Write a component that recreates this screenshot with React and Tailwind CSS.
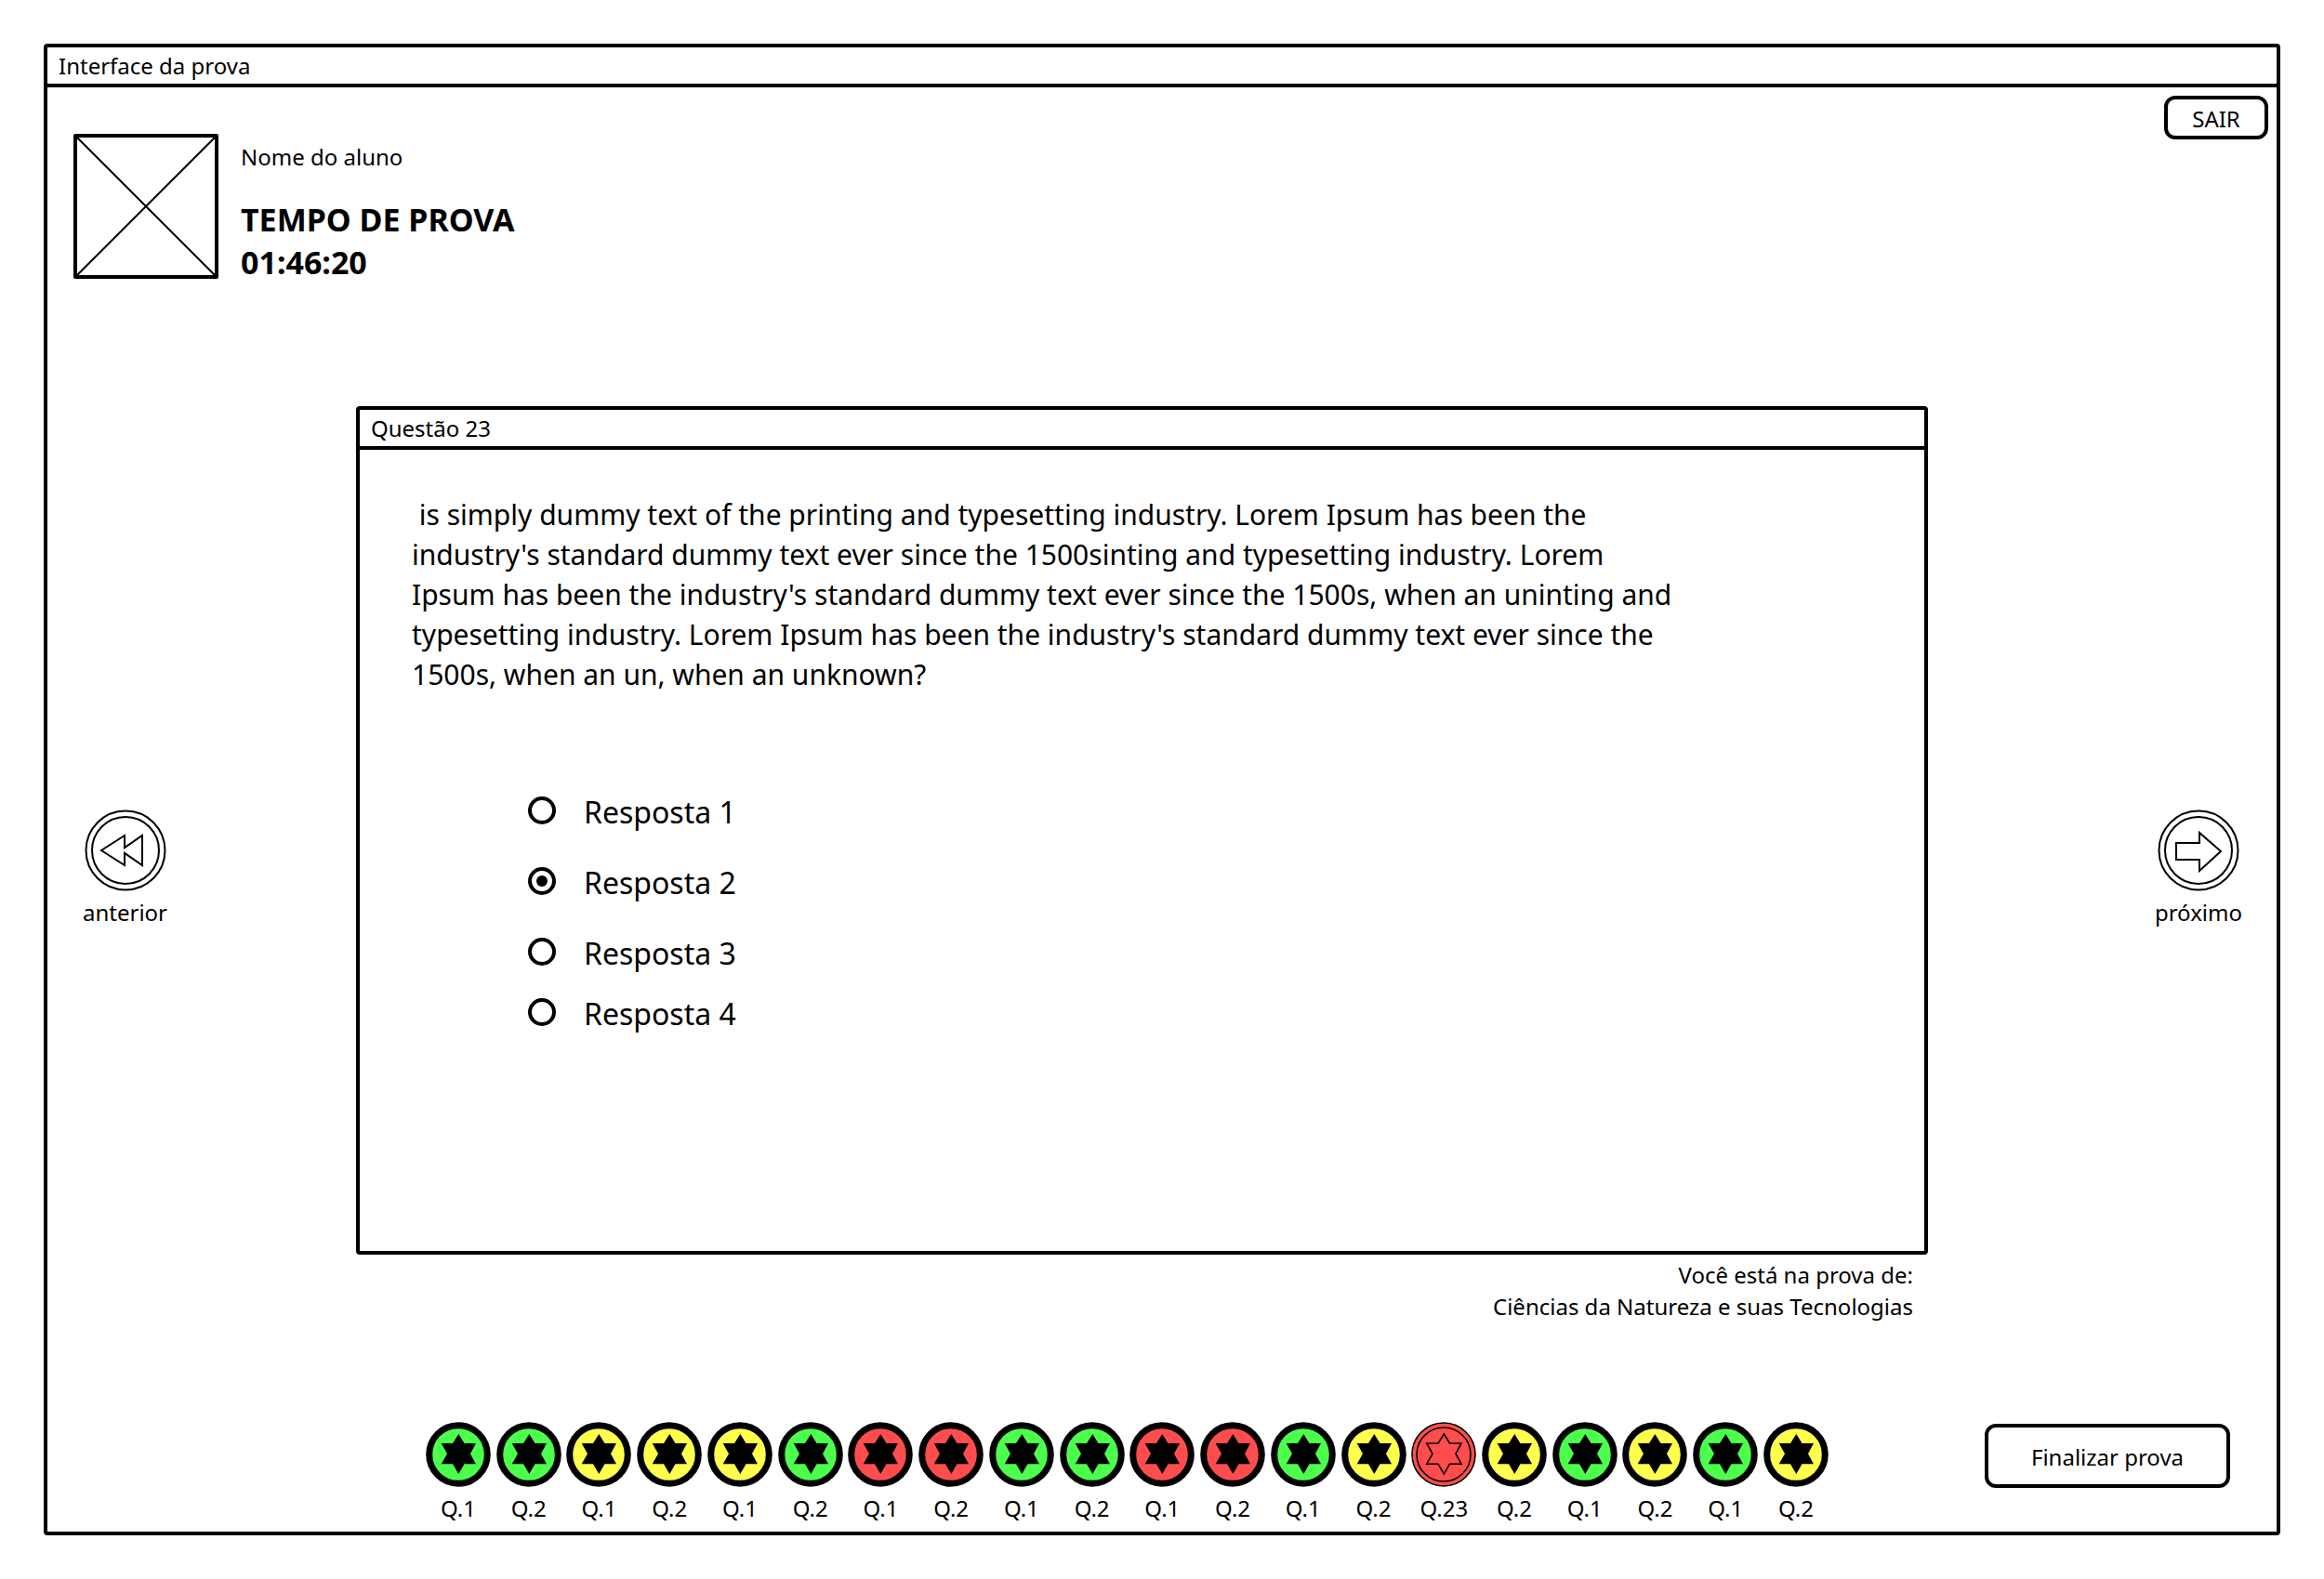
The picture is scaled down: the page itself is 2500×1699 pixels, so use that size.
import { useState } from "react";

const GREEN = "#4dff4d";
const YELLOW = "#ffff4d";
const RED = "#ff4d4d";

const QUESTIONS = [
  ["Q.1", GREEN], ["Q.2", GREEN], ["Q.1", YELLOW], ["Q.2", YELLOW], ["Q.1", YELLOW],
  ["Q.2", GREEN], ["Q.1", RED], ["Q.2", RED], ["Q.1", GREEN], ["Q.2", GREEN],
  ["Q.1", RED], ["Q.2", RED], ["Q.1", GREEN], ["Q.2", YELLOW], ["Q.23", RED],
  ["Q.2", YELLOW], ["Q.1", GREEN], ["Q.2", YELLOW], ["Q.1", GREEN], ["Q.2", YELLOW],
];

const STAR = "35.3,13 41.5,23 54,23 48,34.3 54,45.3 41.5,45.3 35.3,56 29,45.3 16.7,45.3 23,34.3 16.7,23 29,23";

function QuestionMark({ color, current }) {
  return (
    <svg viewBox="0 0 70 70" className="size-[70px]" aria-hidden="true">
      {current ? (
        <g fill={color} stroke="#000" strokeWidth="1.6">
          <circle cx="35" cy="35" r="34" />
          <circle cx="35" cy="35" r="29" />
          <polygon points={STAR} />
        </g>
      ) : (
        <>
          <circle cx="35" cy="35" r="31.3" fill={color} stroke="#000" strokeWidth="7" />
          <polygon points={STAR} fill="#000" />
        </>
      )}
    </svg>
  );
}

function NavButton({ label, points }) {
  return (
    <button type="button" className="flex flex-col items-center gap-1.5">
      <svg viewBox="0 0 88 88" className="size-[88px]" fill="none" stroke="#000" strokeWidth="2" aria-hidden="true">
        <circle cx="44" cy="44" r="42.5" />
        <circle cx="44" cy="44" r="36" />
        <polygon points={points} />
      </svg>
      <span>{label}</span>
    </button>
  );
}

function Answer({ label, checked, onChange, className }) {
  return (
    <label className={className}>
      <input
        type="radio"
        name="resposta"
        checked={checked}
        onChange={onChange}
        className="mb-1 size-[30px] appearance-none rounded-full border-4 border-black bg-white bg-clip-content p-[5px] checked:bg-black"
      />
      <span>{label}</span>
    </label>
  );
}

export default function App() {
  const [answer, setAnswer] = useState(2);
  return (
    <div className="flex min-h-screen bg-white p-[47px] font-['Noto_Sans','Open_Sans',sans-serif] text-[24px] leading-[34px] font-normal text-black">
      <div className="flex grow flex-col rounded-sm border-4 border-black">
        <h1 className="h-[43px] border-b-4 border-black pl-3 leading-[40px]">Interface da prova</h1>

        <header className="flex items-start justify-between pt-[9px] pr-[9px] pl-7">
          <div className="mt-[41px] flex gap-6">
            <svg viewBox="0 0 156 156" className="size-[156px]" fill="none" stroke="#000" role="img" aria-label="Foto do aluno">
              <rect x="2" y="2" width="152" height="152" strokeWidth="4" strokeLinejoin="round" />
              <path d="M3 3 153 153M153 3 3 153" strokeWidth="2" />
            </svg>
            <div className="pt-2">
              <p>Nome do aluno</p>
              <p className="mt-[27px] text-[34px] leading-[46px] font-bold">
                TEMPO DE PROVA
                <br />
                01:46:20
              </p>
            </div>
          </div>
          <button type="button" className="h-[47px] w-28 rounded-xl border-4 border-black pt-0.5">SAIR</button>
        </header>

        <main className="mt-[132px] grid grid-cols-[332px_minmax(0,1fr)_375px] items-start">
          <div className="mt-[434px] flex pl-[38px]">
            <NavButton label="anterior" points="18,44 43,28 43,41 62,28 62,60 43,47 43,60" />
          </div>
          <div>
            <section className="h-[913px] rounded-sm border-4 border-black">
              <h2 className="h-[43px] border-b-4 border-black pl-3 leading-[40px]">Questão 23</h2>
              <p className="mt-12 pl-14 text-[30px] leading-[43px] whitespace-pre">
                {" is simply dummy text of the printing and typesetting industry. Lorem Ipsum has been the\nindustry's standard dummy text ever since the 1500sinting and typesetting industry. Lorem\nIpsum has been the industry's standard dummy text ever since the 1500s, when an uninting and\ntypesetting industry. Lorem Ipsum has been the industry's standard dummy text ever since the\n1500s, when an un, when an unknown?"}
              </p>
              <fieldset className="mt-[104px] flex flex-col pl-[181px] text-[32px] leading-[46px]">
                {[1, 2, 3, 4].map((n) => (
                  <Answer
                    key={n}
                    label={`Resposta ${n}`}
                    checked={answer === n}
                    onChange={() => setAnswer(n)}
                    className={n === 4 ? "flex items-center gap-[30px]" : "mb-[30px] flex items-center gap-[30px] nth-3:mb-[19px]"}
                  />
                ))}
              </fieldset>
            </section>
            <p className="mt-[5px] pr-4 text-right">
              Você está na prova de:
              <br />
              Ciências da Natureza e suas Tecnologias
            </p>
          </div>
          <div className="mt-[434px] flex justify-end pr-[37px]">
            <NavButton label="próximo" points="20,36 45,36 45,25 68,45 45,66 45,54 20,54" />
          </div>
        </main>

        <footer className="mt-[107px] flex items-start pr-[50px] pl-[407px]">
          <nav className="flex grow justify-between">
            {QUESTIONS.map(([label, color], i) => (
              <button key={i} type="button" className="flex w-[70px] flex-col items-center gap-1.5">
                <QuestionMark color={color} current={label === "Q.23"} />
                <span>{label}</span>
              </button>
            ))}
          </nav>
          <button type="button" className="ml-[168px] mt-0.5 h-[69px] w-[264px] rounded-xl border-4 border-black pt-0.5">
            Finalizar prova
          </button>
        </footer>
      </div>
    </div>
  );
}
